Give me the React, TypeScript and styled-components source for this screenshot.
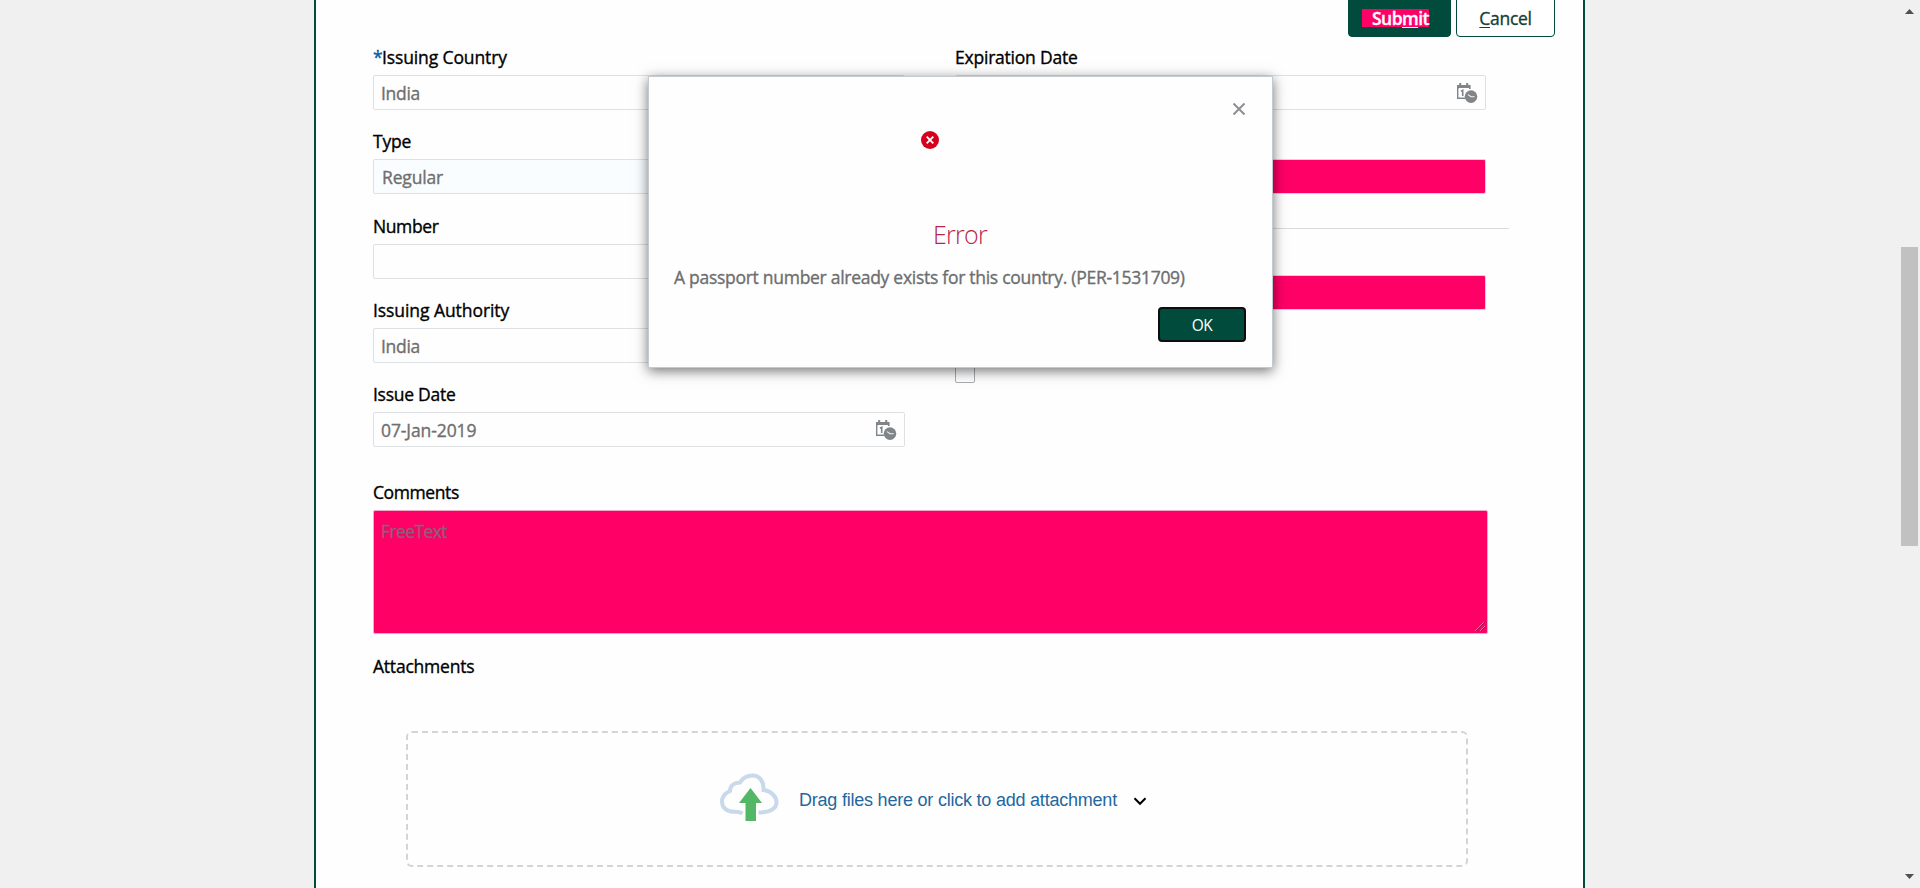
import React from "react";
import styled, { createGlobalStyle } from "styled-components";

const GREEN = "#004b3c";
const PINK = "#ff0066";

const GlobalStyle = createGlobalStyle`
  * { box-sizing: border-box; }
  body {
    margin: 0;
    background: #f0f0f0;
    font-family: "Open Sans", "Noto Sans", sans-serif;
    font-size: 17.5px;
    font-weight: 500;
    color: #000;
  }
`;

const Page = styled.div`
  position: relative;
  display: flex;
  height: 888px;
  overflow: hidden;
`;

const Panel = styled.main`
  width: 1271px;
  height: 888px;
  margin-left: 314px;
  padding: 0 0 0 57px;
  background: #fefefe;
  border: solid ${GREEN};
  border-width: 0 2px;
`;

const Text = styled.span<{ $spacing?: number }>`
  letter-spacing: ${(p) => p.$spacing ?? 0}px;
  white-space: nowrap;
  -webkit-text-stroke: 0.35px currentColor;
`;

const Toolbar = styled.div`
  display: flex;
  justify-content: flex-end;
  gap: 5px;
  height: 37px;
  padding-right: 28px;
`;

const ToolButton = styled.button<{ $primary?: boolean; $width: number }>`
  display: flex;
  align-items: center;
  justify-content: ${(p) => (p.$primary ? "flex-start" : "center")};
  width: ${(p) => p.$width}px;
  height: 41px;
  margin-top: -4px;
  padding: ${(p) => (p.$primary ? "2px 0 0 13px" : "2px 0 0")};
  border: 1px solid ${GREEN};
  border-radius: 4px;
  background: ${(p) => (p.$primary ? GREEN : "#fff")};
  color: ${(p) => (p.$primary ? "#fff" : "#14403a")};
  font: inherit;
  font-weight: ${(p) => (p.$primary ? 600 : 500)};
`;

const Mark = styled.span`
  height: 18px;
  padding-left: 10px;
  background: ${PINK};
  line-height: 18px;
  white-space: nowrap;
`;

const Key = styled.span`
  text-decoration: underline;
  text-decoration-thickness: 1px;
  text-underline-offset: 2px;
`;

const Columns = styled.div`
  display: flex;
  gap: 50px;
  height: 428px;
  padding-top: 8px;
`;

const Column = styled.div<{ $width: number }>`
  width: ${(p) => p.$width}px;
`;

const Field = styled.div`
  height: 84.3px;
`;

const Label = styled.div<{ $spacing?: number }>`
  display: flex;
  height: 30px;
  line-height: 25px;
  letter-spacing: ${(p) => p.$spacing ?? 0}px;
  white-space: nowrap;
  -webkit-text-stroke: 0.35px currentColor;
`;

const Star = styled.span`
  width: 9px;
  color: #0a5aa8;
  letter-spacing: 0;
`;

const Input = styled.div<{ $tint?: boolean }>`
  display: flex;
  align-items: center;
  justify-content: space-between;
  height: 35px;
  padding: 1px 7px 0 ${(p) => (p.$tint ? 8 : 7)}px;
  border: 1px solid #dde1e3;
  border-radius: 2px;
  background: ${(p) => (p.$tint ? "#fafdff" : "#fefefe")};
  color: #6f6f6f;
`;

const PinkField = styled.div<{ $top: number }>`
  height: 35px;
  margin-top: ${(p) => p.$top}px;
  border: 1px solid #f3c9da;
  border-radius: 2px;
  background: ${PINK};
`;

const Rule = styled.div`
  width: 554px;
  height: 1px;
  margin-top: 34px;
  background: #d9dcde;
`;

const Check = styled.div`
  width: 20px;
  height: 20px;
  margin-top: 53px;
  border: 1px solid #a9adb0;
  border-radius: 2px;
  background: #fff;
`;

const Comments = styled.div`
  display: flex;
  align-items: flex-start;
  justify-content: space-between;
  width: 1115px;
  height: 124px;
  padding: 8px 1px 1px 7px;
  border: 1px solid #f0a9c6;
  border-radius: 2px;
  background: ${PINK};
  color: #8f5f79;
`;

const Grip = styled.svg`
  align-self: flex-end;
`;

const CommentsBlock = styled.section`
  padding-top: 15px;
  height: 170px;
`;

const Attachments = styled.section`
  padding-top: 19px;
`;

const DropZone = styled.div`
  display: flex;
  align-items: center;
  width: 1062px;
  height: 136px;
  margin: 47px 0 0 33px;
  padding-left: 311px;
  border: 2px dashed #d4d4d4;
  border-radius: 6px;
`;

const Cloud = styled.svg`
  margin-top: -2px;
`;

const DropText = styled.span`
  margin: 2px 0 0 20px;
  width: 319px;
  color: #23679f;
  font: 400 18px "Liberation Sans", Arial, sans-serif;
  letter-spacing: -0.22px;
  white-space: nowrap;
`;

const Chevron = styled.svg`
  margin: 4px 0 0 15px;
`;

const Scrollbar = styled.div`
  display: flex;
  flex-direction: column;
  align-items: center;
  justify-content: space-between;
  width: 17px;
  height: 888px;
  margin-left: auto;
  margin-right: 2px;
  padding: 9px 0;
`;

const Thumb = styled.div`
  width: 17px;
  height: 299px;
  margin: 233px 0 auto;
  background: #c1c1c1;
`;

const Dialog = styled.div`
  position: absolute;
  left: 648px;
  top: 76px;
  display: flex;
  flex-direction: column;
  width: 625px;
  height: 292px;
  padding: 25px 26px 25px 25px;
  border: 1px solid #c4cbd0;
  background: #fefefe;
  box-shadow: 0 3px 12px rgba(0, 0, 0, 0.55);
`;

const CloseIcon = styled.svg`
  align-self: flex-end;
`;

const ErrorIcon = styled.svg`
  margin: 15px 0 0 247px;
`;

const Title = styled.h1`
  margin: 63px 0 0;
  height: 44px;
  color: #bb2549;
  font: 300 25px/44px "Open Sans", sans-serif;
  letter-spacing: -0.7px;
  text-align: center;
`;

const Message = styled.p<{ $spacing: number }>`
  margin: 9px 0 0;
  height: 24px;
  color: #6c6e70;
  line-height: 24px;
  letter-spacing: ${(p) => p.$spacing}px;
  white-space: nowrap;
  -webkit-text-stroke: 0.35px currentColor;
`;

const OkButton = styled.button`
  align-self: flex-end;
  width: 88px;
  height: 35px;
  margin-top: auto;
  border: 2px solid #0c0f0e;
  border-radius: 4px;
  background: ${GREEN};
  color: #fff;
  font: 400 15.5px "Open Sans", sans-serif;
  letter-spacing: -0.4px;
`;

const CalendarIcon = () => (
  <svg width="22" height="22" viewBox="0 0 22 22">
    <path d="M1.7 5v11.3H9" fill="none" stroke="#80858a" strokeWidth="1.4" />
    <path d="M1 3h2.2V1h2v2h5V1h2v2h2.4v4H13V6H2.4v1H1z" fill="#80858a" />
    <path d="M5 9.3l1.7-1V14" fill="none" stroke="#80858a" strokeWidth="1.6" />
    <circle cx="15" cy="14.6" r="6.3" fill="#80858a" />
    <path d="M12 12.6l3 2.2h3.600" fill="none" stroke="#f2f2f2" strokeWidth="1.1" />
  </svg>
);

const App = () => (
  <Page>
    <GlobalStyle />
    <Panel>
      <Toolbar>
        <ToolButton $primary $width={103}>
          <Mark>
            <Text $spacing={-0.55}>
              Sub<Key>m</Key>it
            </Text>
          </Mark>
        </ToolButton>
        <ToolButton $width={99}>
          <Text $spacing={-0.3}>
            <Key>C</Key>ancel
          </Text>
        </ToolButton>
      </Toolbar>
      <Columns>
        <Column $width={532}>
          <Field>
            <Label $spacing={-0.12}>
              <Star>*</Star>Issuing Country
            </Label>
            <Input>
              <Text $spacing={-0.3}>India</Text>
            </Input>
          </Field>
          <Field>
            <Label $spacing={-0.2}>Type</Label>
            <Input $tint>
              <Text $spacing={-0.15}>Regular</Text>
            </Input>
          </Field>
          <Field>
            <Label $spacing={-0.4}>Number</Label>
            <Input />
          </Field>
          <Field>
            <Label $spacing={-0.07}>Issuing Authority</Label>
            <Input>
              <Text $spacing={-0.3}>India</Text>
            </Input>
          </Field>
          <Field>
            <Label $spacing={-0.27}>Issue Date</Label>
            <Input>
              <Text $spacing={-0.1}>07-Jan-2019</Text>
              <CalendarIcon />
            </Input>
          </Field>
        </Column>
        <Column $width={531}>
          <Label $spacing={-0.22}>Expiration Date</Label>
          <Input>
            <Text />
            <CalendarIcon />
          </Input>
          <PinkField $top={49} />
          <Rule />
          <PinkField $top={46} />
          <Check />
        </Column>
      </Columns>
      <CommentsBlock>
        <Label $spacing={-0.4}>Comments</Label>
        <Comments>
          <Text $spacing={-0.6}>FreeText</Text>
          <Grip width="11" height="11" viewBox="0 0 11 11">
            <path d="M1 10L10 1M6 10l4-4" stroke="#8a1f49" strokeWidth="1" />
            <path d="M0 10L9 1M5 10l5-5" stroke="#ffb3cf" strokeWidth="0.6" />
          </Grip>
        </Comments>
      </CommentsBlock>
      <Attachments>
        <Label $spacing={-0.22}>Attachments</Label>
        <DropZone>
          <Cloud width="60" height="50" viewBox="0 0 60 50">
            <path
              d="M23.5 40.5C21 39 20 38.8 16 38.8C8 39 3 35 3 28.5C3 23.5 6.500 20 11 18C11 12.500 15 9.500 21 9.500C24 4.500 28 2.500 33.500 2.500C41 2.500 45 9 44.500 17C52 18 57.500 23 57.500 29.500C57.500 36 50 39.500 39.500 39.500"
              fill="none"
              stroke="#c8d9eb"
              strokeWidth="4"
            />
            <path d="M31.500 15L43 30h-6v18H26.500V30H20z" fill="#53b765" />
          </Cloud>
          <DropText>Drag files here or click to add attachment</DropText>
          <Chevron width="14" height="9" viewBox="0 0 14 9">
            <path d="M1.500 1.200l5.500 5.600 5.500-5.600" fill="none" stroke="#000" strokeWidth="2" />
          </Chevron>
        </DropZone>
      </Attachments>
    </Panel>
    <Scrollbar>
      <svg width="9" height="5" viewBox="0 0 9 5">
        <path d="M0 5L4.500 0L9 5z" fill="#505050" />
      </svg>
      <Thumb />
      <svg width="9" height="5" viewBox="0 0 9 5">
        <path d="M0 0L4.500 5L9 0z" fill="#505050" />
      </svg>
    </Scrollbar>
    <Dialog>
      <CloseIcon width="14" height="14" viewBox="0 0 14 14">
        <path d="M1.500 1.500l11 11M12.500 1.500l-11 11" stroke="#8c9094" strokeWidth="2" />
      </CloseIcon>
      <ErrorIcon width="18" height="18" viewBox="0 0 18 18">
        <circle cx="9" cy="9" r="9" fill="#d6001c" />
        <path d="M5.700 5.700l6.600 6.600M12.300 5.700l-6.600 6.600" stroke="#fff" strokeWidth="1.900" />
      </ErrorIcon>
      <Title>Error</Title>
      <Message $spacing={-0.28}>
        A passport number already exists for this country. (PER-1531709)
      </Message>
      <OkButton>OK</OkButton>
    </Dialog>
  </Page>
);

export default App;
